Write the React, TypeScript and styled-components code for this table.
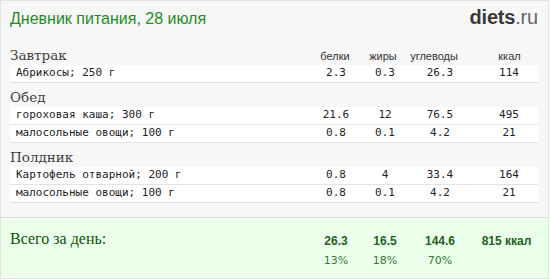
import React from "react";
import styled, { createGlobalStyle } from "styled-components";

const GlobalStyle = createGlobalStyle`
  html, body { margin: 0; padding: 0; background: #ffffff; }
`;

type Item = { name: string; p: string; f: string; c: string; k: string };
type Meal = { title: string; items: Item[] };

const meals: Meal[] = [
  { title: "Завтрак", items: [{ name: "Абрикосы; 250 г", p: "2.3", f: "0.3", c: "26.3", k: "114" }] },
  {
    title: "Обед",
    items: [
      { name: "гороховая каша; 300 г", p: "21.6", f: "12", c: "76.5", k: "495" },
      { name: "малосольные овощи; 100 г", p: "0.8", f: "0.1", c: "4.2", k: "21" },
    ],
  },
  {
    title: "Полдник",
    items: [
      { name: "Картофель отварной; 200 г", p: "0.8", f: "4", c: "33.4", k: "164" },
      { name: "малосольные овощи; 100 г", p: "0.8", f: "0.1", c: "4.2", k: "21" },
    ],
  },
];

const Frame = styled.div`
  width: 549px;
  height: 279px;
  box-sizing: border-box;
  border: 1px solid #e2e2e2;
  background: #f7f7f7;
  display: flex;
  flex-direction: column;
`;

const Body = styled.div`
  padding: 0 10px 14px 9px;
`;

const Header = styled.div`
  height: 40px;
  box-sizing: border-box;
  padding-top: 6px;
  display: flex;
  justify-content: space-between;
  align-items: baseline;
`;

const Title = styled.h1`
  margin: 0;
  font: normal 16px/20px "Liberation Sans", Arial, sans-serif;
  color: #1f8c1f;
`;

const Logo = styled.div`
  font: normal 20px/20px "Liberation Sans", Arial, sans-serif;
  color: #666666;
  letter-spacing: -0.2px;
`;

const LogoBold = styled.span`
  font-weight: bold;
  color: #3a3a3a;
`;

const SectionHead = styled.div`
  height: 24px;
  box-sizing: border-box;
  padding-top: 6px;
  display: grid;
  grid-template-columns: 302px 46px 50px 52px 77px;
  align-items: baseline;
`;

const SectionTitle = styled.div`
  font: normal 13.5px/16px "DejaVu Serif", Georgia, serif;
  color: #404040;
`;

const ColLabel = styled.div<{ $padLeft?: number }>`
  font: normal 11px/14px "Liberation Sans", Arial, sans-serif;
  color: #333333;
  text-align: center;
  padding-left: ${(p) => p.$padLeft ?? 0}px;
`;

const Row = styled.div`
  height: 18px;
  box-sizing: border-box;
  background: #ffffff;
  border-bottom: 1px solid #e3e3e3;
  display: grid;
  grid-template-columns: 302px 48px 50px 60px 67px;
  font: normal 11px/15px "DejaVu Sans Mono", "Liberation Mono", monospace;
  color: #222222;
`;

const NameCell = styled.div`
  padding-left: 6px;
  white-space: nowrap;
`;

const NumCell = styled.div<{ $padLeft?: number }>`
  text-align: center;
  padding-left: ${(p) => p.$padLeft ?? 0}px;
`;

const Totals = styled.div`
  flex: 1;
  border-top: 1px solid #dcdcdc;
  background: #ebffeb;
  padding: 0 10px 0 9px;
  display: flex;
`;

const TotalLabel = styled.div`
  width: 302px;
  padding-top: 12px;
  font: normal 16px/18px "Liberation Serif", "Times New Roman", serif;
  color: #0b560b;
`;

const Figures = styled.div`
  padding-top: 16px;
  display: grid;
  grid-template-columns: 48px 50px 60px 67px;
  grid-template-rows: 14px 14px;
  row-gap: 5.5px;
`;

const BoldFig = styled.div<{ $padLeft?: number }>`
  text-align: center;
  padding-left: ${(p) => p.$padLeft ?? 0}px;
  font: bold 12px/14px "Liberation Sans", Arial, sans-serif;
  color: #1f5f1f;
  white-space: nowrap;
`;

const PctFig = styled.div`
  text-align: center;
  font: normal 11px/14px "DejaVu Sans", Verdana, sans-serif;
  color: #3a763a;
`;

export default function App() {
  return (
    <>
      <GlobalStyle />
      <Frame>
        <Body>
          <Header>
            <Title>Дневник питания, 28 июля</Title>
            <Logo>
              <LogoBold>diets</LogoBold>.ru
            </Logo>
          </Header>
          {meals.map((meal, i) => (
            <section key={meal.title}>
              <SectionHead>
                <SectionTitle>{meal.title}</SectionTitle>
                {i === 0 && (
                  <>
                    <ColLabel>белки</ColLabel>
                    <ColLabel>жиры</ColLabel>
                    <ColLabel>углеводы</ColLabel>
                    <ColLabel $padLeft={22}>ккал</ColLabel>
                  </>
                )}
              </SectionHead>
              {meal.items.map((it, j) => (
                <Row key={j}>
                  <NameCell>{it.name}</NameCell>
                  <NumCell>{it.p}</NumCell>
                  <NumCell>{it.f}</NumCell>
                  <NumCell>{it.c}</NumCell>
                  <NumCell $padLeft={11}>{it.k}</NumCell>
                </Row>
              ))}
            </section>
          ))}
        </Body>
        <Totals>
          <TotalLabel>Всего за день:</TotalLabel>
          <Figures>
            <BoldFig>26.3</BoldFig>
            <BoldFig>16.5</BoldFig>
            <BoldFig>144.6</BoldFig>
            <BoldFig $padLeft={6}>815 ккал</BoldFig>
            <PctFig>13%</PctFig>
            <PctFig>18%</PctFig>
            <PctFig>70%</PctFig>
          </Figures>
        </Totals>
      </Frame>
    </>
  );
}
